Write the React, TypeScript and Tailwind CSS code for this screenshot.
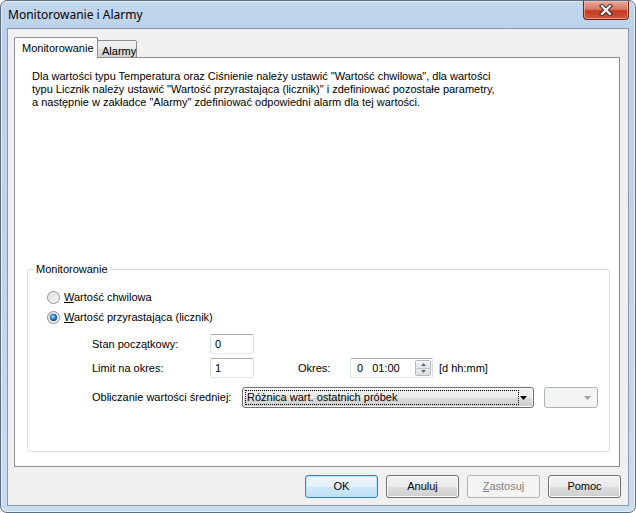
import React from "react";

const F = { fontFamily: '"Liberation Sans", Arial, sans-serif' } as const;

function Radio({ checked }: { checked?: boolean }) {
  return (
    <svg width="13" height="13" viewBox="0 0 13 13" className="shrink-0">
      <defs>
        <linearGradient id={checked ? "rg1" : "rg0"} x1="0" y1="0" x2="1" y2="1">
          <stop offset="0" stopColor="#d4d4d4" />
          <stop offset="1" stopColor="#fbfbfb" />
        </linearGradient>
        <radialGradient id="dot" cx="0.4" cy="0.35" r="0.7">
          <stop offset="0" stopColor="#a6e0ff" />
          <stop offset="0.55" stopColor="#2b86d6" />
          <stop offset="1" stopColor="#0d3f7a" />
        </radialGradient>
      </defs>
      <circle cx="6.5" cy="6.5" r="6" fill={`url(#${checked ? "rg1" : "rg0"})`} stroke="#8f8f8f" strokeWidth="1" />
      <circle cx="6.5" cy="6.5" r="4.5" fill="none" stroke="#f4f4f4" strokeWidth="0.8" />
      {checked && <circle cx="6.5" cy="6.5" r="3.4" fill="url(#dot)" stroke="#1c4f86" strokeWidth="0.6" />}
    </svg>
  );
}

function Btn({ children, kind }: { children: React.ReactNode; kind?: "default" | "disabled" }) {
  const base =
    "w-[73px] h-[23px] rounded-[3px] flex items-center justify-center text-[11px] border";
  if (kind === "default")
    return (
      <div
        className={`${base} border-[#3c7fb1] bg-[linear-gradient(180deg,#eef7fd_0%,#e3f1fb_50%,#cfe8f9_51%,#bfe0f6_100%)] shadow-[inset_0_0_0_1px_#b9e4fb] text-black`}
        style={F}
      >
        {children}
      </div>
    );
  if (kind === "disabled")
    return (
      <div className={`${base} border-[#adb2b5] bg-[#f4f4f4] text-[#838383]`} style={F}>
        {children}
      </div>
    );
  return (
    <div
      className={`${base} border-[#707070] bg-[linear-gradient(180deg,#f2f2f2_0%,#ebebeb_50%,#dddddd_51%,#cfcfcf_100%)] shadow-[inset_0_0_0_1px_#fbfbfb] text-black`}
      style={F}
    >
      {children}
    </div>
  );
}

function TextBox({ w, children }: { w: string; children?: React.ReactNode }) {
  return (
    <div
      className={`${w} h-[20px] rounded-[2px] border border-t-[#abadb3] border-l-[#dbdfe6] border-r-[#dbdfe6] border-b-[#e3e9ef] bg-white flex items-center pl-[4px] text-[11px] text-black`}
      style={F}
    >
      {children}
    </div>
  );
}

export default function App() {
  return (
    <div
      className="w-[636px] h-[513px] flex flex-col rounded-[7px] border border-[#5d6d7e] bg-[linear-gradient(180deg,#c3d8ef_0%,#bcd2ea_28px,#c2d6ec_60%,#cadcf0_100%)] shadow-[inset_0_0_0_1px_rgba(255,255,255,0.55)] overflow-hidden"
      style={F}
    >
      {/* title bar */}
      <div className="h-[27px] flex items-start justify-between shrink-0">
        <span
          className="ml-[7px] mt-[6px] text-[12px] leading-[16px] text-black"
          style={{ fontFamily: '"Noto Sans", "Open Sans", sans-serif' }}
        >
          Monitorowanie i Alarmy
        </span>
        <div className="mr-[6px] w-[46px] h-[19px] rounded-b-[4px] border border-t-0 border-[#6b2519] bg-[linear-gradient(180deg,#e9a998_0%,#d97a62_45%,#c4381f_55%,#cf5a3d_100%)] shadow-[inset_0_0_0_1px_rgba(255,210,200,0.5)] flex items-center justify-center">
          <svg width="14" height="12" viewBox="0 0 14 12">
            <path d="M3 2 L11 10 M11 2 L3 10" stroke="#3d2a28" strokeWidth="4.2" strokeLinecap="square" />
            <path d="M3 2 L11 10 M11 2 L3 10" stroke="#ffffff" strokeWidth="2.2" strokeLinecap="square" />
          </svg>
        </div>
      </div>

      {/* client area */}
      <div className="mx-[6px] mb-[6px] flex-1 border border-[#8a99a8] bg-[#f0f0f0] flex flex-col">
        {/* tabs */}
        <div className="mt-[8px] ml-[6px] h-[21px] flex items-end relative z-10 -mb-px">
          <div className="h-[21px] w-[84px] bg-white border border-b-0 border-[#898c95] rounded-t-[2px] flex items-start pt-[2px] pl-[7px] text-[11px] text-black">
            Monitorowanie
          </div>
          <div className="h-[18px] w-[40px] -ml-px border border-[#898c95] border-b-[#898c95] rounded-t-[2px] bg-[linear-gradient(180deg,#f3f3f3_0%,#ebebeb_50%,#dddddd_51%,#d2d2d2_100%)] flex items-start pt-[2px] pl-[4px] text-[11px] text-black">
            Alarmy
          </div>
        </div>

        {/* tab page */}
        <div className="ml-[6px] mr-[8px] h-[410px] border border-[#898c95] bg-white flex flex-col">
          <p className="pt-[12px] pl-[17px] text-[11px] leading-[13px] text-black">
            Dla wartości typu Temperatura oraz Ciśnienie należy ustawić "Wartość chwilowa", dla wartości
            <br />
            typu Licznik należy ustawić "Wartość przyrastająca (licznik)" i zdefiniować pozostałe parametry,
            <br />
            a następnie w zakładce "Alarmy" zdefiniować odpowiedni alarm dla tej wartości.
          </p>

          {/* group box */}
          <div className="mt-auto mb-[14px] ml-[12px] mr-[9px] h-[183px] rounded-[3px] border border-[#d5dfe5] relative flex flex-col">
            <span className="absolute left-[6px] top-[-8px] bg-white px-[2px] text-[11px] leading-[14px] text-black">
              Monitorowanie
            </span>
            <div className="pt-[17px] pl-[19px] flex flex-col">
              <div className="h-[20px] flex items-center gap-[4px] text-[11px] text-black">
                <Radio />
                <span>
                  <span className="underline">W</span>artość chwilowa
                </span>
              </div>
              <div className="h-[20px] flex items-center gap-[4px] text-[11px] text-black">
                <Radio checked />
                <span>
                  <span className="underline">W</span>artość przyrastająca (licznik)
                </span>
              </div>
            </div>

            <div className="pl-[64px] flex flex-col text-[11px] text-black">
              <div className="mt-[7px] h-[20px] flex items-center">
                <span className="w-[118px]">Stan początkowy:</span>
                <TextBox w="w-[44px]">0</TextBox>
              </div>
              <div className="mt-[4px] h-[20px] flex items-center">
                <span className="w-[118px]">Limit na okres:</span>
                <TextBox w="w-[44px]">1</TextBox>
                <span className="ml-[44px] w-[52px]">Okres:</span>
                <div className="w-[83px] h-[20px] rounded-[2px] border border-t-[#abadb3] border-l-[#dbdfe6] border-r-[#dbdfe6] border-b-[#e3e9ef] bg-white flex items-center">
                  <span className="ml-[6px]">0</span>
                  <span className="ml-[9px]">01:00</span>
                  <div className="ml-auto mr-[1px] w-[16px] h-[16px] flex flex-col border border-[#b5b9bf] rounded-[2px] overflow-hidden">
                    <div className="flex-1 bg-[linear-gradient(180deg,#f6f6f6,#e4e4e4)] border-b border-[#c2c5ca] flex items-center justify-center">
                      <svg width="5" height="3" viewBox="0 0 5 3">
                        <path d="M0 3 L2.5 0 L5 3 Z" fill="#4e6d96" />
                      </svg>
                    </div>
                    <div className="flex-1 bg-[linear-gradient(180deg,#eeeeee,#dcdcdc)] flex items-center justify-center">
                      <svg width="5" height="3" viewBox="0 0 5 3">
                        <path d="M0 0 L5 0 L2.5 3 Z" fill="#4e6d96" />
                      </svg>
                    </div>
                  </div>
                </div>
                <span className="ml-[6px]">[d hh:mm]</span>
              </div>
              <div className="mt-[9px] h-[21px] flex items-center">
                <span className="w-[150px]">Obliczanie wartości średniej:</span>
                <div className="w-[292px] h-[21px] rounded-[3px] border border-[#707070] bg-[linear-gradient(180deg,#f2f2f2_0%,#ebebeb_50%,#dddddd_51%,#cfcfcf_100%)] shadow-[inset_0_0_0_1px_#fbfbfb] flex items-center pl-[2px] pr-[6px]">
                  <div className="h-[15px] w-[274px] border border-dotted border-black flex items-center pl-[1px] leading-[13px]">
                    Różnica wart. ostatnich próbek
                  </div>
                  <svg width="7" height="4" viewBox="0 0 7 4" className="ml-auto">
                    <path d="M0 0 L7 0 L3.5 4 Z" fill="#000" />
                  </svg>
                </div>
                <div className="ml-[10px] w-[54px] h-[21px] rounded-[3px] border border-[#adb2b5] bg-[#f4f4f4] flex items-center justify-end pr-[6px]">
                  <svg width="7" height="4" viewBox="0 0 7 4">
                    <path d="M0 0 L7 0 L3.5 4 Z" fill="#a0a0a0" />
                  </svg>
                </div>
              </div>
            </div>
          </div>
        </div>

        {/* buttons */}
        <div className="mt-[8px] mr-[7px] flex justify-end gap-[8px]">
          <Btn kind="default">OK</Btn>
          <Btn>Anuluj</Btn>
          <Btn kind="disabled">
            <span>
              <span className="underline">Z</span>astosuj
            </span>
          </Btn>
          <Btn>Pomoc</Btn>
        </div>
      </div>
    </div>
  );
}
